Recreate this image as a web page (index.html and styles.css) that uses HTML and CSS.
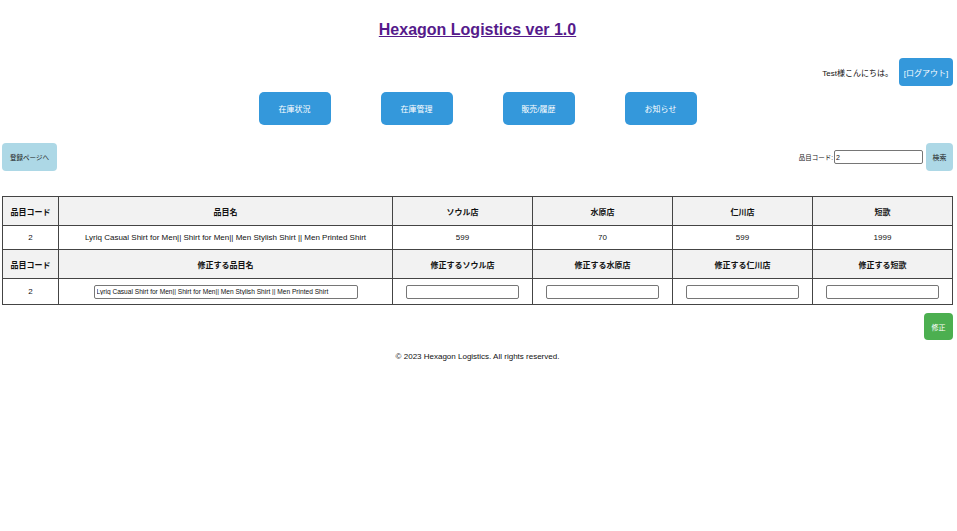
FILE: index.html
```html
<!DOCTYPE html>
<html lang="ja">
<head>
<meta charset="utf-8">
<title>Hexagon Logistics</title>
<link rel="stylesheet" href="styles.css">
</head>
<body>
<div class="page">
  <header class="top">
    <h1 class="title"><a href="#" class="title-link">Hexagon Logistics ver 1.0</a></h1>
    <div class="user-row">
      <span class="greeting">Test様こんにちは。</span>
      <button class="btn btn-blue btn-logout">[ログアウト]</button>
    </div>
    <nav class="nav">
      <button class="btn btn-blue nav-btn">在庫状況</button>
      <button class="btn btn-blue nav-btn">在庫管理</button>
      <button class="btn btn-blue nav-btn">販売/履歴</button>
      <button class="btn btn-blue nav-btn">お知らせ</button>
    </nav>
  </header>

  <div class="toolbar">
    <button class="btn btn-light btn-register">登録ページへ</button>
    <form class="search">
      <label class="search-label">品目コード:</label>
      <input class="search-input" type="text" value="2">
      <button type="button" class="btn btn-light btn-search">検索</button>
    </form>
  </div>

  <table class="grid">
    <colgroup>
      <col class="c-code"><col class="c-name"><col class="c-store"><col class="c-store"><col class="c-store"><col class="c-store">
    </colgroup>
    <tr class="head">
      <th>品目コード</th><th>品目名</th><th>ソウル店</th><th>水原店</th><th>仁川店</th><th>短歌</th>
    </tr>
    <tr class="row">
      <td>2</td><td>Lyriq Casual Shirt for Men|| Shirt for Men|| Men Stylish Shirt || Men Printed Shirt</td><td>599</td><td>70</td><td>599</td><td>1999</td>
    </tr>
    <tr class="head">
      <th>品目コード</th><th>修正する品目名</th><th>修正するソウル店</th><th>修正する水原店</th><th>修正する仁川店</th><th>修正する短歌</th>
    </tr>
    <tr class="row row-edit">
      <td>2</td>
      <td><input class="cell-input name-input" type="text" value="Lyriq Casual Shirt for Men|| Shirt for Men|| Men Stylish Shirt || Men Printed Shirt"></td>
      <td><input class="cell-input" type="text"></td>
      <td><input class="cell-input" type="text"></td>
      <td><input class="cell-input" type="text"></td>
      <td><input class="cell-input" type="text"></td>
    </tr>
  </table>

  <div class="actions">
    <button class="btn btn-green btn-edit">修正</button>
  </div>

  <footer class="footer">© 2023 Hexagon Logistics. All rights reserved.</footer>
</div>
</body>
</html>
```

FILE: styles.css
```css
* { box-sizing: border-box; }

body {
  margin: 0;
  background: #fff;
  color: #111;
  font-family: "Liberation Sans", "Noto Sans CJK JP", sans-serif;
  font-size: 8px;
}

.page {
  padding: 0 4px 0 2px;
}

.title {
  margin: 0;
  padding-top: 19px;
  text-align: center;
  font-size: 16px;
  line-height: 22px;
  font-weight: bold;
}

.title-link {
  color: #551a8b;
  text-decoration: underline;
}

.user-row {
  display: flex;
  justify-content: flex-end;
  align-items: center;
  gap: 6px;
  margin-top: 17px;
}

.greeting {
  font-size: 8px;
  color: #111;
}

.btn {
  border: none;
  border-radius: 4px;
  font-family: inherit;
  cursor: pointer;
  padding: 0;
}

.btn-blue {
  background: #3498db;
  color: #fff;
}

.btn-light {
  background: #add8e6;
  color: #222;
}

.btn-green {
  background: #4caf50;
  color: #fff;
}

.btn-logout {
  width: 54px;
  height: 28px;
  font-size: 8px;
}

.nav {
  display: flex;
  justify-content: center;
  gap: 50px;
  margin-top: 6px;
}

.nav-btn {
  width: 72px;
  height: 33px;
  font-size: 8px;
  border-radius: 5px;
}

.toolbar {
  display: flex;
  justify-content: space-between;
  align-items: center;
  margin-top: 18px;
}

.btn-register {
  width: 55px;
  height: 28px;
  font-size: 6.5px;
}

.search {
  display: flex;
  align-items: center;
  margin: 0;
}

.search-label {
  font-size: 6.5px;
  color: #222;
}

.search-input {
  width: 89px;
  height: 14px;
  margin: 0 3px 0 1px;
  padding: 0 1px;
  border: 1px solid #767676;
  border-radius: 2px;
  font-family: inherit;
  font-size: 7px;
  color: #111;
}

.btn-search {
  width: 27px;
  height: 28px;
  font-size: 7px;
}

.grid {
  width: 100%;
  margin-top: 25px;
  border-collapse: collapse;
  table-layout: fixed;
}

.c-code { width: 56px; }
.c-name { width: 334px; }
.c-store { width: 140px; }

.grid th,
.grid td {
  border: 1px solid #444;
  text-align: center;
  padding: 0 4px;
  font-size: 8px;
  color: #111;
}

.grid th {
  background: #f2f2f2;
  height: 29px;
  font-weight: bold;
}

.grid .row td {
  height: 24px;
  font-size: 8px;
}

.grid .row-edit td {
  height: 26px;
}

.cell-input {
  width: 113px;
  height: 14px;
  border: 1px solid #767676;
  border-radius: 2px;
  padding: 0 2px;
  font-family: inherit;
  font-size: 6.6px;
  color: #111;
  vertical-align: middle;
}

.name-input {
  width: 264px;
}

.actions {
  display: flex;
  justify-content: flex-end;
  margin-top: 8px;
}

.btn-edit {
  width: 29px;
  height: 27px;
  font-size: 7px;
}

.footer {
  text-align: center;
  font-size: 8px;
  margin-top: 12px;
  color: #111;
}
```
